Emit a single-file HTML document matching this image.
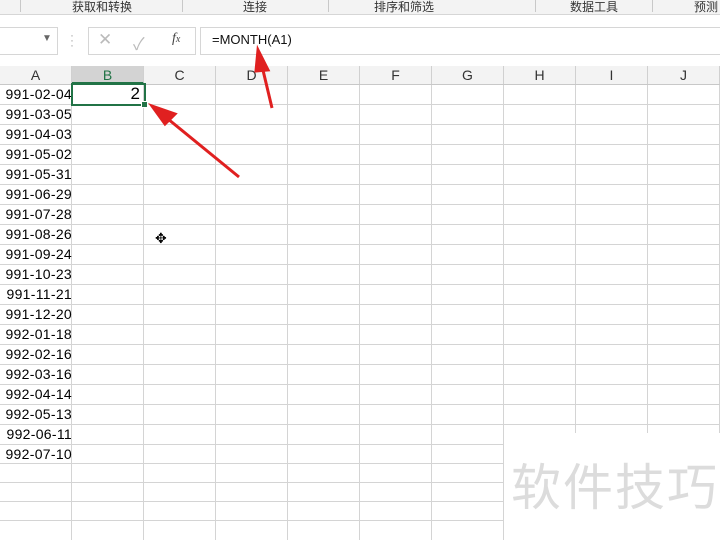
<html><head><style>
body{margin:0;width:720px;height:540px;overflow:hidden;background:#fff;font-family:"Liberation Sans","Noto Sans CJK SC",sans-serif;position:relative}
.a{position:absolute}
.rib{top:0;left:0;width:720px;height:14px;background:#f3f3f3;border-bottom:1px solid #d6d6d6;font-size:12px;color:#333}
.rib span{position:absolute;top:-2px}
.vl{position:absolute;top:0;height:12px;width:1px;background:#c8c8c8}
.hdr{top:66px;left:0;width:720px;height:18px;background:#f3f3f3;border-bottom:1px solid #c8c8c8}
.ch{position:absolute;top:0;height:18px;width:71px;border-right:1px solid #d0d0d0;text-align:center;font-size:14px;line-height:18px;color:#333}
</style></head><body>
<div class="a rib">
<div class="vl" style="left:20px"></div><span style="left:72px">获取和转换</span>
<div class="vl" style="left:182px"></div><span style="left:243px">连接</span>
<div class="vl" style="left:328px"></div><span style="left:374px">排序和筛选</span>
<div class="vl" style="left:535px"></div><span style="left:570px">数据工具</span>
<div class="vl" style="left:652px"></div><span style="left:694px">预测</span>
</div>
<div class="a" style="top:27px;left:0;width:57px;height:26px;border:1px solid #d6d6d6;border-left:none"></div>
<div class="a" style="top:33px;left:42px;font-size:10px;color:#666">▼</div>
<div class="a" style="top:33px;left:70px;font-size:12px;color:#aaa;line-height:5px">·<br>·<br>·</div>
<div class="a" style="top:27px;left:88px;width:106px;height:26px;border:1px solid #d6d6d6"></div>
<div class="a" style="top:30px;left:98px;font-size:17px;color:#bbb">✕</div>
<div class="a" style="top:30px;left:133px;font-size:17px;color:#bbb">✓</div>
<div class="a" style="top:31px;left:172px;font-size:14px;color:#444;font-style:italic;font-family:'Liberation Serif',serif">f<span style="font-size:10px">x</span></div>
<div class="a" style="top:27px;left:200px;width:530px;height:26px;border:1px solid #d6d6d6"></div>
<div class="a" style="top:32px;left:212px;font-size:13px;color:#111">=MONTH(A1)</div>
<div class="a hdr">
<div class="ch" style="left:0">A</div>
<div class="ch" style="left:72px;background:#d3d3d3;color:#217346;border-bottom:2px solid #217346;height:16px;line-height:18px">B</div>
<div class="ch" style="left:144px">C</div><div class="ch" style="left:216px">D</div><div class="ch" style="left:288px">E</div><div class="ch" style="left:360px">F</div><div class="ch" style="left:432px">G</div><div class="ch" style="left:504px">H</div><div class="ch" style="left:576px">I</div><div class="ch" style="left:648px">J</div>
</div>
<svg class="a" style="top:85px;left:0" width="720" height="455">
<g stroke="#d4d4d4" stroke-width="1">
<path d="M71.5 0V455M143.5 0V455M215.5 0V455M287.5 0V455M359.5 0V455M431.5 0V455M503.5 0V455M575.5 0V348M647.5 0V348M719.5 0V348"/>
<path d="M0 19.5H720M0 39.5H720M0 59.5H720M0 79.5H720M0 99.5H720M0 119.5H720M0 139.5H720M0 159.5H720M0 179.5H720M0 199.5H720M0 219.5H720M0 239.5H720M0 259.5H720M0 279.5H720M0 299.5H720M0 319.5H720M0 339.5H720M0 359.5H504M0 378.5H504M0 397.5H504M0 416.5H504M0 435.5H504"/>
</g></svg>
<div class="a" style="top:84px;left:0;font-size:14px;line-height:20px;width:72px;text-align:right;letter-spacing:0.3px;white-space:nowrap;direction:rtl">
<div style="direction:ltr">991-02-04</div><div style="direction:ltr">991-03-05</div><div style="direction:ltr">991-04-03</div><div style="direction:ltr">991-05-02</div><div style="direction:ltr">991-05-31</div><div style="direction:ltr">991-06-29</div><div style="direction:ltr">991-07-28</div><div style="direction:ltr">991-08-26</div><div style="direction:ltr">991-09-24</div><div style="direction:ltr">991-10-23</div><div style="direction:ltr">991-11-21</div><div style="direction:ltr">991-12-20</div><div style="direction:ltr">992-01-18</div><div style="direction:ltr">992-02-16</div><div style="direction:ltr">992-03-16</div><div style="direction:ltr">992-04-14</div><div style="direction:ltr">992-05-13</div><div style="direction:ltr">992-06-11</div><div style="direction:ltr">992-07-10</div>
</div>
<div class="a" style="top:83px;left:71px;width:71px;height:19px;border:2px solid #217346"></div>
<div class="a" style="top:101px;left:141px;width:5px;height:5px;background:#217346;border:1px solid #fff"></div>
<div class="a" style="top:84px;left:72px;width:68px;text-align:right;font-size:17px;line-height:20px">2</div>
<div class="a" style="top:230px;left:155px;font-size:14px">✥</div>
<div class="a" style="top:448px;left:511px;font-size:50px;color:#dcdcdc;letter-spacing:2px">软件技巧</div>
<svg class="a" style="top:0;left:0" width="720" height="540">
<g stroke="#e02020" stroke-width="3" fill="#e02020">
<path d="M272 108L262 66"/><path d="M258 50L268 70L256 71Z"/>
<path d="M239 177L168 119"/><path d="M152 106L175 114L165 124Z"/>
</g></svg>
</body></html>
